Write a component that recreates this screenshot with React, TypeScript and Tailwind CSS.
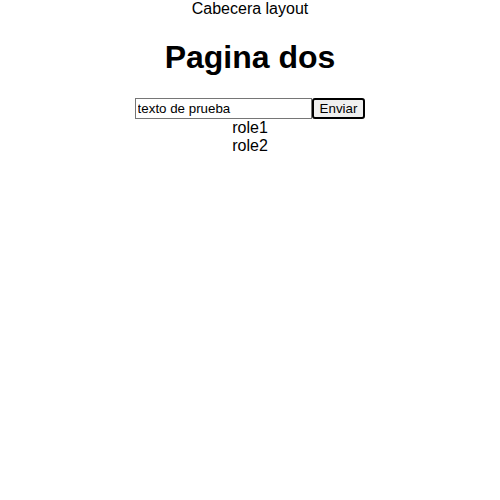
export default function App() {
  return (
    <div className="min-h-[500px] bg-white text-black text-center font-['Liberation_Sans',Arial,sans-serif] text-base leading-[18px]">
      <header>Cabecera layout</header>
      <h1 className="my-[21.44px] text-[32px] leading-[37px] font-bold">Pagina dos</h1>
      <form className="flex justify-center items-center" onSubmit={(e) => e.preventDefault()}>
        <input
          type="text"
          defaultValue="texto de prueba"
          className="w-[177px] h-[21px] border border-[#767676] px-[2px] text-[13.33px] text-black outline-none"
        />
        <button
          type="submit"
          className="h-[21px] border-2 border-black rounded-[3px] bg-[#efefef] px-[6px] text-[13.33px] leading-[15px] text-black"
        >
          Enviar
        </button>
      </form>
      <ul>
        <li>role1</li>
        <li>role2</li>
      </ul>
    </div>
  );
}
